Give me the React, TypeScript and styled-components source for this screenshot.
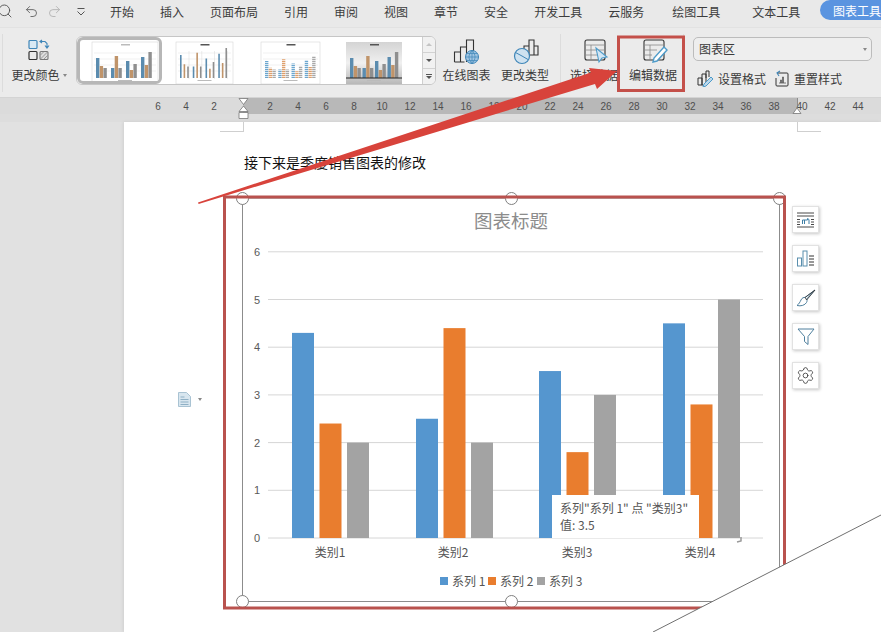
import React from "react";
import styled, { createGlobalStyle } from "styled-components";
import { Search, Undo2, Redo2, Settings } from "lucide-react";

const Global = createGlobalStyle`
  html, body { margin: 0; padding: 0; background: #e2e2e2; }
  body { width: 881px; height: 632px; overflow: hidden; font-family: "Noto Sans CJK SC", "Liberation Sans", sans-serif; }
  * { box-sizing: border-box; }
`;

const Shell = styled.div`position: relative; width: 881px; height: 632px; overflow: hidden; display: flex; flex-direction: column;`;

/* ---------- tab bar ---------- */
const TabBar = styled.div`height: 28px; flex: none; background: #e9e9e9; display: flex; align-items: flex-start; padding-top: 3px; border-bottom: 1px solid #e2e2e2;`;
const QuickAccess = styled.div`width: 110px; flex: none; height: 17px; display: flex; align-items: center; color: #666; padding-left: 24px; position: relative;`;
const QuickSearch = styled.span`position: absolute; left: -3px; top: 0; display: flex; color: #555;`;
const QuickIcon = styled.span<{ $w: number; $faded?: boolean }>`width: ${p => p.$w}px; display: flex; color: ${p => (p.$faded ? "#b4b4b4" : "#666")};`;
const Tab = styled.span<{ $gap: number }>`font-size: 12px; line-height: 17px; color: #3c3c3c; margin-right: ${p => p.$gap}px; white-space: nowrap;`;
const ActiveTab = styled.span`margin-left: auto; width: 61px; height: 20px; margin-top: -3px; background: #5a94e0; color: #fff; font-size: 12px; line-height: 21px; padding-left: 13px; white-space: nowrap; overflow: hidden; border-radius: 10px 0 0 10px;`;

/* ---------- ribbon ---------- */
const Ribbon = styled.div`height: 70px; flex: none; background: #ebebeb; display: flex; align-items: flex-start; border-bottom: 1px solid #d4d4d4;`;
const RibbonButton = styled.div<{ $left: number; $w?: number }>`width: ${p => p.$w ?? 48}px; margin-left: ${p => p.$left}px; flex: none; height: 69px; display: flex; flex-direction: column; align-items: center; padding-top: 11px; color: #3a3a3a;`;
const RibbonIcon = styled.div<{ $shift?: number }>`height: 29px; display: flex; align-items: flex-start; justify-content: center; margin-left: ${p => p.$shift ?? 0}px;`;
const RibbonLabel = styled.div`font-size: 12px; line-height: 14px; white-space: nowrap; display: flex; align-items: center; gap: 3px;`;
const Caret = styled.span`width: 0; height: 0; border-left: 2.5px solid transparent; border-right: 2.5px solid transparent; border-top: 3px solid #888;`;
const Separator = styled.div<{ $left: number }>`width: 1px; height: 58px; margin-top: 6px; margin-left: ${p => p.$left}px; background: #dcdcdc; flex: none;`;

const Gallery = styled.div`width: 360px; height: 49px; margin-left: 8px; margin-top: 8px; flex: none; background: #fff; border: 1px solid #c6c6c6; border-radius: 6px; display: flex; overflow: hidden;`;
const Thumb = styled.div<{ $selected?: boolean }>`width: 85px; height: 47px; flex: none; display: flex; border: ${p => (p.$selected ? "3px solid #b7b7b7" : "0")}; border-radius: 6px; overflow: hidden;`;
const GalleryFill = styled.div`flex: 1;`;
const GalleryScroll = styled.div`width: 13px; flex: none; display: flex; flex-direction: column; background: #f1f1f1; border-left: 1px solid #cfcfcf;`;
const ScrollCell = styled.div`flex: 1; display: flex; align-items: center; justify-content: center; border-bottom: 1px solid #d2d2d2; &:last-child { border-bottom: 0; }`;
const ScrollGlyph = styled.span<{ $up?: boolean; $pale?: boolean }>`width: 0; height: 0; border-left: 3px solid transparent; border-right: 3px solid transparent;
  ${p => (p.$up ? `border-bottom: 3px solid #c4c4c4;` : `border-top: 3px solid ${p.$pale ? "#c4c4c4" : "#555"};`)}`;
const ScrollMore = styled.span`display: flex; flex-direction: column; align-items: center; gap: 1px; &::before { content: ""; width: 6px; height: 1px; background: #555; }`;

const FormatGroup = styled.div`width: 179px; margin-left: 9px; margin-top: 9px; flex: none; display: flex; flex-direction: column; gap: 9px;`;
const ElementSelect = styled.div`height: 24px; border: 1px solid #bcbcbc; border-radius: 5px; background: #eeeeee; font-size: 12px; line-height: 22px; padding-left: 5px; color: #3a3a3a; display: flex; align-items: center; justify-content: space-between; padding-right: 4px;`;
const FormatRow = styled.div`display: flex; padding-left: 4px; height: 17px;`;
const FormatItem = styled.div<{ $w: number }>`width: ${p => p.$w}px; display: flex; align-items: center; gap: 5px; font-size: 12px; color: #3a3a3a; white-space: nowrap;`;

/* ---------- ruler ---------- */
const Ruler = styled.div`position: relative; height: 24px; flex: none; background: #dddddd;`;
const RulerStrip = styled.div`height: 16px; display: flex; padding-left: 144px; background: linear-gradient(to right, #dbdbdb 243px, #b8b8b8 243px, #b8b8b8 797px, #dbdbdb 797px);`;
const RulerTick = styled.span`width: 28px; flex: none; text-align: center; font-family: "Liberation Sans", sans-serif; font-size: 10px; line-height: 17px; color: #4f4f4f;`;
const RulerMark = styled.svg<{ $x: number }>`position: absolute; left: ${p => p.$x}px; top: 0;`;

/* ---------- document ---------- */
const Workspace = styled.div`flex: 1; display: flex; background: #e1e1e1; min-height: 0;`;
const Margin = styled.div`width: 124px; flex: none;`;
const Page = styled.div`position: relative; flex: 1; background: #fff; padding-top: 31px; box-shadow: -1px 0 3px rgba(0,0,0,.08);`;
const CornerMark = styled.div<{ $side: "left" | "right" }>`position: absolute; top: 0; height: 10px; width: 24px;
  ${p => (p.$side === "left" ? `left: 96px; border-right: 1px solid #cfcfcf;` : `left: 673px; border-left: 1px solid #cfcfcf;`)}
  border-bottom: 1px solid #cfcfcf;`;
const Paragraph = styled.p`margin: 0 0 0 120px; font-size: 14px; line-height: 18px; color: #111; white-space: nowrap;`;
const ChartRow = styled.div`display: flex; align-items: flex-start; margin-top: 27px; padding-left: 54px;`;
const ParaMarker = styled.div`width: 64px; flex: none; margin-top: 194px; display: flex; align-items: center; gap: 7px;`;
const ChartFrame = styled.div`position: relative; width: 538px; height: 404px; flex: none; background: #fff; border: 1px solid #8c8c8c; border-top-color: #b9b9b9;`;
const ChartSvg = styled.svg`display: block; position: absolute; left: -1px; top: -1px; font-family: "Noto Sans CJK SC", "Liberation Sans", sans-serif;`;
const Handle = styled.span<{ $x: number; $y: number }>`position: absolute; left: ${p => p.$x - 7}px; top: ${p => p.$y - 7}px; width: 13px; height: 13px; border-radius: 50%; background: #fff; border: 1px solid #808080;`;
const Tooltip = styled.div`position: absolute; left: 309px; top: 296px; width: 147px; height: 43px; background: #fff; padding: 4px 0 0 8px; font-size: 12px; line-height: 17px; color: #555; white-space: pre;`;
const SideTools = styled.div`display: flex; flex-direction: column; gap: 12px; margin-left: 12px; margin-top: 8px;`;
const SideTool = styled.div`width: 27px; height: 27px; background: #fff; border: 1px solid #e2e2e2; box-shadow: 1px 1px 3px rgba(0,0,0,.22); display: flex; align-items: center; justify-content: center; color: #333;`;

/* ---------- annotation ---------- */
const Annotations = styled.svg`position: absolute; left: 0; top: 0; pointer-events: none;`;

/* ---------- mini chart thumbs ---------- */
const groups = [0, 1, 2, 3];
function MiniChart({ variant }: { variant: 1 | 2 | 3 | 4 }) {
  const off = variant === 1 ? -3 : 0;
  const frame = { 1: [15, 66], 2: [14, 57], 3: [14, 59], 4: [14, 56] }[variant] as [number, number];
  const h = [[20, 12, 10], [10, 22, 10], [17, 8, 14], [21, 13, 26]];
  const palette = variant === 3 ? ["#6ba6cf", "#dfa06c", "#a8a8a8"] : ["#5b8caf", "#c0946a", "#8f8f8f"];
  return (
    <svg width={variant === 1 ? 79 : 85} height={variant === 1 ? 41 : 47} viewBox={`${-off} ${-off} ${variant === 1 ? 79 : 85} ${variant === 1 ? 41 : 47}`}>
      <defs>
        <linearGradient id="mg" x1="0" y1="0" x2="0" y2="1"><stop offset="0" stopColor="#d4d4d4" /><stop offset=".5" stopColor="#f0f0f0" /><stop offset="1" stopColor="#b8b8b8" /></linearGradient>
      </defs>
      <rect x={frame[0]} y={5} width={frame[1]} height={42} fill={variant === 4 ? "url(#mg)" : "#fff"} stroke={variant === 4 ? "none" : "#d6d6d6"} strokeWidth=".6" />
      <rect x={frame[0] + frame[1] / 2 - 4} y={7} width={9} height={1.5} fill={variant === 1 ? "#bbb" : "#555"} />
      {variant !== 4 && [16, 22, 28, 34].map(y => <line key={y} x1={frame[0] + 2} x2={frame[0] + frame[1] - 2} y1={y} y2={y} stroke="#e3e3e3" strokeWidth=".5" />)}
      {groups.map(i => {
        const step = (frame[1] - 6) / 4;
        const x0 = frame[0] + 4 + i * step;
        const w = variant === 2 ? 1.6 : 3.4;
        const dash = variant === 3 ? "1.2 0.8" : undefined;
        return (
          <g key={i}>
            {variant === 2 && <line x1={x0 + 9} x2={x0 + 9} y1={14} y2={42} stroke="#d8d8d8" strokeWidth=".5" />}
            {h[i].map((v, j) => {
              const vv = variant === 3 ? v * 0.85 : variant === 2 ? v * 1.15 : v;
              const xx = x0 + j * (w + (variant === 2 ? 2 : 0.3));
              return <line key={j} x1={xx + w / 2} x2={xx + w / 2} y1={41} y2={41 - vv} stroke={palette[j]} strokeWidth={w} strokeDasharray={dash} />;
            })}
          </g>
        );
      })}
      {variant === 4 && <line x1={frame[0]} x2={frame[0] + frame[1]} y1={41} y2={41} stroke="#222" strokeWidth="1" />}
      <rect x={frame[0] + frame[1] / 2 - 7} y={43} width={14} height={1} fill="#bbb" />
    </svg>
  );
}

/* ---------- icons ---------- */
const ChangeColorIcon = () => (
  <svg width="22" height="22" viewBox="0 0 22 22" fill="none">
    <rect x="1" y="1.5" width="8" height="8" rx="1" stroke="#3f86b8" strokeWidth="1.2" fill="#d9e9f4" />
    <path d="M12 2.5h5l2 2v4M17 6.5l2 2.5 2-2.5M14 1l-2 1.5 2 1.5" stroke="#3f86b8" strokeWidth="1.1" />
    <rect x="1" y="12.5" width="8" height="8" rx="1" stroke="#333" strokeWidth="1.2" />
    <rect x="12" y="12.5" width="8" height="8" rx="1" stroke="#777" strokeWidth="1.1" fill="#ddd" />
    <path d="M12.5 20l7-7M12.5 16l3.5-3.5M16 20l3.5-3.5" stroke="#888" strokeWidth=".8" />
  </svg>
);
const OnlineChartIcon = () => (
  <svg width="30" height="26" viewBox="0 0 30 26" fill="none">
    <path d="M2.5 23V13h6v10M8.5 23V8h6v15M14.5 8V1h7v13M2.5 23h10" stroke="#333" strokeWidth="1.1" />
    <circle cx="20" cy="18" r="6.5" fill="#9fc4e2" stroke="#3f86b8" />
    <path d="M13.5 18h13M20 11.500v13M15 14.500h10M15 21.500h10M20 11.500c-4 4-4 9 0 13M20 11.500c4 4 4 9 0 13" stroke="#3f86b8" strokeWidth=".7" />
  </svg>
);
const ChangeTypeIcon = () => (
  <svg width="28" height="26" viewBox="0 0 28 26" fill="none">
    <path d="M13 15V7h5v9M18 16V1h5v15M23 7h4v9h-9" stroke="#333" strokeWidth="1.1" />
    <circle cx="11" cy="17" r="7.500" fill="#cfe2f0" stroke="#3f86b8" strokeWidth="1.2" />
    <path d="M11 17L4.500 13.500M11 17l6 3.500" stroke="#3f86b8" />
  </svg>
);
const SelectDataIcon = () => (
  <svg width="26" height="26" viewBox="0 0 26 26" fill="none">
    <rect x="1" y="1" width="20" height="20" rx="2" stroke="#333" strokeWidth="1.1" />
    <path d="M1 6h20M1 11h20M1 16h20M7 6v15" stroke="#888" strokeWidth=".8" />
    <path d="M12 9l11 9-5 1-3 4z" fill="#d2e6f4" stroke="#4e9bc9" strokeWidth="1.1" />
  </svg>
);
const EditDataIcon = () => (
  <svg width="26" height="26" viewBox="0 0 26 26" fill="none">
    <rect x="1" y="1" width="20" height="20" rx="2" stroke="#333" strokeWidth="1.1" />
    <path d="M1 6h20M1 11h13M1 16h8M7 6v15" stroke="#888" strokeWidth=".8" />
    <path d="M21 8l3 3-10 11-4 1 1-4z" fill="#fff" stroke="#4e9bc9" strokeWidth="1.4" />
  </svg>
);
const FormatIcon = () => (
  <svg width="16" height="17" viewBox="0 0 16 17" fill="none">
    <path d="M1 15V8h4v7M5 15V4h4v8M9 8V1h3v6M1 15h5" stroke="#333" strokeWidth="1" />
    <path d="M14 7l2 2-7 7-3 1 1-3z" fill="#bcd8ec" stroke="#4e9bc9" strokeWidth="1" />
  </svg>
);
const ResetIcon = () => (
  <svg width="15" height="17" viewBox="0 0 15 17" fill="none">
    <path d="M3 3h10a1 1 0 0 1 1 1v11a1 1 0 0 1-1 1H3a1 1 0 0 1-1-1V8" stroke="#333" strokeWidth="1" />
    <path d="M5 13h7M6.500 13V10h1v3M8.500 13V7h1v6" stroke="#555" strokeWidth=".8" />
    <path d="M6 1L3 3l2 3" stroke="#3f86b8" strokeWidth="1.1" />
  </svg>
);
const QuickMenuIcon = () => (
  <svg width="10" height="10" viewBox="0 0 10 10" fill="none" stroke="#555">
    <path d="M1.500 1.500h7" /><path d="M1.500 4.500L5 8l3.500-3.500" />
  </svg>
);
const DocIcon = () => (
  <svg width="13" height="15" viewBox="0 0 13 15" fill="none">
    <path d="M.5.500h8l4 4v10H.5z" fill="#d8e6ef" stroke="#a9c3d3" />
    <path d="M2.500 5h4M2.500 7.500h8M2.500 10h8M2.500 12.500h8" stroke="#8fb0c5" />
  </svg>
);
const ElementsIcon = () => (
  <svg width="18" height="18" viewBox="0 0 18 18" fill="none">
    <path d="M0 2h17M0 16h17M0 5h17" stroke="#333" strokeWidth=".9" />
    <path d="M0 8.500h3M0 11h3M14 8.500h3M14 11h3M0 13.500h3M14 13.500h3" stroke="#333" strokeWidth=".9" />
    <path d="M5.500 13V9h5V7.500l1.500 1v4.500M7.500 9v4" stroke="#3f7fa6" strokeWidth="1" />
  </svg>
);
const LayoutIcon = () => (
  <svg width="18" height="17" viewBox="0 0 18 17" fill="none">
    <rect x=".5" y="8" width="4" height="8" fill="#fff" stroke="#5a8fae" />
    <rect x="6" y="1" width="4" height="15" fill="#fff" stroke="#5a8fae" />
    <path d="M12 6h5M12 9h5M12 12h5M12 15h5" stroke="#333" />
  </svg>
);
const BrushIcon = () => (
  <svg width="20" height="18" viewBox="0 0 20 18" fill="none">
    <path d="M19 1L9 8.500c-1-.3-3 .2-4 2.500-1 2-2 4-4 5.500 4 1 8-.3 9.500-3 .8-1.500.6-2.500.2-3.500L19 1z" fill="#fff" stroke="#4e7f9d" />
    <path d="M19 1L9 8.500l1.700 2.500z" stroke="#333" strokeWidth=".8" />
  </svg>
);
const FilterIcon = () => (
  <svg width="18" height="17" viewBox="0 0 18 17" fill="none">
    <path d="M1 1h16l-6 7.500v8l-3.500-3v-5z" fill="#fff" stroke="#4e7f9d" strokeWidth="1" />
  </svg>
);

const tabs: [string, number][] = [
  ["开始", 26], ["插入", 26], ["页面布局", 26], ["引用", 26], ["审阅", 26], ["视图", 26], ["章节", 26],
  ["安全", 26], ["开发工具", 26], ["云服务", 28], ["绘图工具", 32], ["文本工具", 19],
];
const rulerTicks = ["6", "4", "2", "", "2", "4", "6", "8", "10", "12", "14", "16", "18", "20", "22", "24", "26", "28", "30", "32", "34", "36", "38", "40", "42", "44"];

const plotValues = [
  { x: 292, v: [4.3, 2.4, 2.0] },
  { x: 416, v: [2.5, 4.4, 2.0] },
  { x: 539, v: [3.5, 1.8, 3.0] },
  { x: 663, v: [4.5, 2.8, 5.0] },
];
const barColors = ["#5596cf", "#e97d2e", "#a3a3a3"];
const Y0 = 538;
const STEP = 47.7;
const cats = [["类别1", 330], ["类别2", 453], ["类别3", 577], ["类别4", 700]] as const;
const legend = [["系列 1", 440], ["系列 2", 488], ["系列 3", 537]] as const;

export default function App() {
  return (
    <Shell>
      <Global />
      <TabBar>
        <QuickAccess>
          <QuickSearch><Search size={16} strokeWidth={1.4} /></QuickSearch>
          <QuickIcon $w={23}><Undo2 size={15} strokeWidth={1.5} /></QuickIcon>
          <QuickIcon $w={29} $faded><Redo2 size={15} strokeWidth={1.5} /></QuickIcon>
          <QuickIcon $w={10}><QuickMenuIcon /></QuickIcon>
        </QuickAccess>
        {tabs.map(([t, g]) => <Tab key={t} $gap={g}>{t}</Tab>)}
        <ActiveTab>图表工具</ActiveTab>
      </TabBar>

      <Ribbon>
        <Separator $left={2} />
        <RibbonButton $left={7} $w={58}>
          <RibbonIcon><ChangeColorIcon /></RibbonIcon>
          <RibbonLabel>更改颜色<Caret /></RibbonLabel>
        </RibbonButton>
        <Gallery>
          <Thumb $selected><MiniChart variant={1} /></Thumb>
          <Thumb><MiniChart variant={2} /></Thumb>
          <Thumb><MiniChart variant={3} /></Thumb>
          <Thumb><MiniChart variant={4} /></Thumb>
          <GalleryFill />
          <GalleryScroll>
            <ScrollCell><ScrollGlyph $up /></ScrollCell>
            <ScrollCell><ScrollGlyph /></ScrollCell>
            <ScrollCell><ScrollMore><ScrollGlyph /></ScrollMore></ScrollCell>
          </GalleryScroll>
        </Gallery>
        <RibbonButton $left={6} $w={49}>
          <RibbonIcon><OnlineChartIcon /></RibbonIcon>
          <RibbonLabel>在线图表</RibbonLabel>
        </RibbonButton>
        <RibbonButton $left={10}>
          <RibbonIcon><ChangeTypeIcon /></RibbonIcon>
          <RibbonLabel>更改类型</RibbonLabel>
        </RibbonButton>
        <Separator $left={11} />
        <RibbonButton $left={9}>
          <RibbonIcon $shift={6}><SelectDataIcon /></RibbonIcon>
          <RibbonLabel>选择数据</RibbonLabel>
        </RibbonButton>
        <RibbonButton $left={11}>
          <RibbonIcon $shift={6}><EditDataIcon /></RibbonIcon>
          <RibbonLabel>编辑数据</RibbonLabel>
        </RibbonButton>
        <Separator $left={6} />
        <FormatGroup>
          <ElementSelect>图表区<Caret /></ElementSelect>
          <FormatRow>
            <FormatItem $w={77}><FormatIcon />设置格式</FormatItem>
            <FormatItem $w={80}><ResetIcon />重置样式</FormatItem>
          </FormatRow>
        </FormatGroup>
      </Ribbon>

      <Ruler>
        <RulerStrip>{rulerTicks.map((t, i) => <RulerTick key={i}>{t}</RulerTick>)}</RulerStrip>
        <RulerMark $x={238} width="11" height="22" viewBox="0 0 11 22" fill="#fff" stroke="#777" strokeWidth=".8">
          <path d="M1 .5h9L5.500 6.500zM5.500 8L10 13.500H1zM1 14.500h9v6H1z" />
        </RulerMark>
        <RulerMark $x={792} width="10" height="17" viewBox="0 0 10 17" fill="#fff" stroke="#777" strokeWidth=".8">
          <path d="M5.500 0v10" /><path d="M5 10l4 5.500H1z" />
        </RulerMark>
      </Ruler>

      <Workspace>
        <Margin />
        <Page>
          <CornerMark $side="left" />
          <CornerMark $side="right" />
          <Paragraph>接下来是季度销售图表的修改</Paragraph>
          <ChartRow>
            <ParaMarker><DocIcon /><Caret /></ParaMarker>
            <ChartFrame>
              <ChartSvg width="538" height="404" viewBox="242 198 538 404">
                <text x="511" y="228" textAnchor="middle" fontSize="18.5" fill="#8c8c8c">图表标题</text>
                {[0, 1, 2, 3, 4, 5, 6].map(n => (
                  <g key={n}>
                    <line x1="268" x2="763" y1={Y0 - n * STEP} y2={Y0 - n * STEP} stroke="#d6d6d6" />
                    <text x="257" y={Y0 - n * STEP + 4} textAnchor="middle" fontSize="11" fill="#595959" fontFamily="Liberation Sans, sans-serif">{n}</text>
                  </g>
                ))}
                {plotValues.map(g => g.v.map((v, j) => (
                  <rect key={g.x + "-" + j} x={g.x + j * 27.500} y={Y0 - v * STEP} width="22" height={v * STEP} fill={barColors[j]} />
                )))}
                {cats.map(([c, x]) => <text key={c} x={x} y="557" textAnchor="middle" fontSize="12" fill="#555">{c}</text>)}
                {legend.map(([l, x], i) => (
                  <g key={l}>
                    <rect x={x} y="577" width="8" height="8" fill={barColors[i]} />
                    <text x={x + 12} y="586" fontSize="12" fill="#555">{l}</text>
                  </g>
                ))}
                <path d="M737 542l4-1 0-4" stroke="#999" strokeWidth="1.5" fill="none" />
              </ChartSvg>
              <Tooltip>{'系列"系列 1" 点 "类别3"\n值: 3.5'}</Tooltip>
              <Handle $x={0} $y={0} />
              <Handle $x={269} $y={0} />
              <Handle $x={537} $y={0} />
              <Handle $x={0} $y={403} />
              <Handle $x={269} $y={403} />
            </ChartFrame>
            <SideTools>
              <SideTool><ElementsIcon /></SideTool>
              <SideTool><LayoutIcon /></SideTool>
              <SideTool><BrushIcon /></SideTool>
              <SideTool><FilterIcon /></SideTool>
              <SideTool><Settings size={19} strokeWidth={1} /></SideTool>
            </SideTools>
          </ChartRow>
        </Page>
      </Workspace>

      <Annotations width="881" height="632" viewBox="0 0 881 632" fill="none">
        <rect x="224.500" y="197" width="560" height="411" stroke="#b9524e" strokeWidth="3" />
        <polygon points="881,515 881,632 653,632" fill="#fff" />
        <line x1="881" y1="515" x2="653" y2="632" stroke="#707070" strokeWidth="1" />
        <rect x="618.500" y="37" width="65" height="53.500" stroke="#c4504a" strokeWidth="3" />
        <polygon points="198,202.500 591,72.500 589,68 617,71 597,89 595,84 198.600,204" fill="#d8433b" />
      </Annotations>
    </Shell>
  );
}
